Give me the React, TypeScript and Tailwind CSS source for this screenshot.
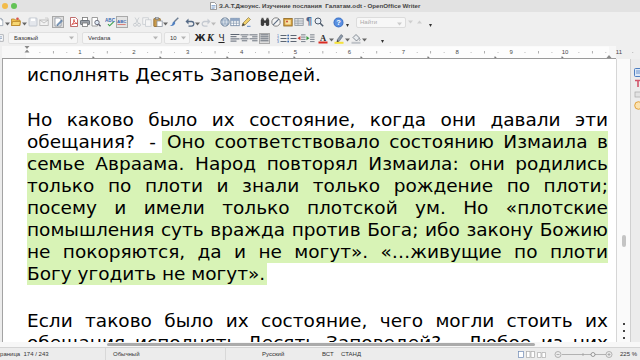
import React from 'react';

// ---------- small helpers ----------

function Slot({ w, children }: { w: string; children?: React.ReactNode }) {
  return <div className={`${w} h-full shrink-0 flex items-center justify-center`}>{children}</div>;
}

function Caret({ c = '#666' }: { c?: string }) {
  return (
    <svg width="5" height="4" viewBox="0 0 5 4" className="mt-[3px]">
      <path d="M0 0.5h5L2.5 3.5z" fill={c} />
    </svg>
  );
}

function Ico({ children }: { children: React.ReactNode }) {
  return (
    <svg width="10" height="10" viewBox="0 0 10 10" strokeWidth="0.8">
      {children}
    </svg>
  );
}

// ---------- toolbar icons ----------

const NewDoc = () => (
  <Ico>
    <path d="M1.5 .5h5l2 2v7h-7z" fill="#fff" stroke="#7f8ea0" />
    <path d="M6.5 .5v2h2" fill="none" stroke="#7f8ea0" />
  </Ico>
);
const OpenDoc = () => (
  <Ico>
    <path d="M.5 2h3l1 1h4.5v5.5h-8.5z" fill="#f2c04b" stroke="#b8852a" />
    <path d="M1.5 4.5h8l-1 4h-8z" fill="#f7d772" stroke="#b8852a" />
    <circle cx="6.5" cy="1.8" r="1.3" fill="#d9534a" />
  </Ico>
);
const Save = () => (
  <Ico>
    <rect x="1" y="1" width="8" height="8" rx="0.8" fill="#e4e7ec" stroke="#b9c0c9" />
    <rect x="3" y="1.5" width="4" height="2.5" fill="#fff" />
  </Ico>
);
const Mail = () => (
  <Ico>
    <rect x="0.8" y="3" width="8.4" height="5.5" fill="#f2f2f2" stroke="#b5b5b5" />
    <path d="M.8 3l4.2 3 4.2-3" fill="none" stroke="#b5b5b5" />
    <path d="M6 1h3v2" fill="none" stroke="#c7c7c7" />
  </Ico>
);
const EditDoc = () => (
  <div className="w-[12px] h-[12px] border border-[#a9a9a9] bg-[#dedede] flex items-center justify-center">
    <Ico>
      <path d="M2 1h4.5l1.5 1.5v6.5h-6z" fill="#fff" stroke="#8a93a0" />
      <path d="M4 7.5l4.5-4.5 1 1-4.5 4.5h-1z" fill="#7a9cc9" stroke="#41607f" strokeWidth="0.5" />
    </Ico>
  </div>
);
const Pdf = () => (
  <Ico>
    <path d="M1.5 .5h5l2 2v7h-7z" fill="#fff" stroke="#b04a4a" />
    <path d="M2.5 8c1.5-1 3-4 2.5-5.5-.5 1.5 1 3.5 3 4-1.5-.3-4 .3-5.5 1.5z" fill="none" stroke="#d0302a" />
  </Ico>
);
const Print = () => (
  <Ico>
    <rect x="2.5" y="0.5" width="5" height="3" fill="#fff" stroke="#777" />
    <rect x="0.5" y="3.5" width="9" height="4" rx="0.6" fill="#9aa0a8" stroke="#5e646c" />
    <rect x="2.5" y="6" width="5" height="3.5" fill="#fff" stroke="#777" />
  </Ico>
);
const Preview = () => (
  <Ico>
    <path d="M1 .5h5.5v8.5h-5.5z" fill="#fff" stroke="#888" />
    <circle cx="6" cy="5.5" r="2.2" fill="#dfe9f5" stroke="#556" />
    <path d="M7.6 7.2l2 2" stroke="#556" strokeWidth="1.3" />
  </Ico>
);
const Spell = () => (
  <svg width="11" height="10" viewBox="0 0 11 10">
    <text x="0" y="5" fontSize="4.6" fontWeight="700" fill="#3a67b0" fontFamily="Liberation Sans, sans-serif">ABC</text>
    <path d="M3 7.2l1.6 1.6 4-4" fill="none" stroke="#3aa04a" strokeWidth="1.1" />
  </svg>
);
const AutoSpell = () => (
  <div className="w-[12px] h-[12px] border border-[#a9a9a9] bg-[#e3e3e3] flex items-center justify-center">
    <svg width="10" height="10" viewBox="0 0 10 10">
      <text x="0" y="5.5" fontSize="4.4" fontWeight="700" fill="#3a67b0" fontFamily="Liberation Sans, sans-serif">ABC</text>
      <path d="M0.5 8l1-1 1 1 1-1 1 1 1-1 1 1 1-1 1 1" fill="none" stroke="#d23a2e" strokeWidth="0.7" />
    </svg>
  </div>
);
const Cut = () => (
  <Ico>
    <path d="M3 .5l3.5 6M7 .5l-3.5 6" stroke="#c2c6cc" />
    <circle cx="3" cy="7.8" r="1.5" fill="none" stroke="#c2c6cc" />
    <circle cx="7" cy="7.8" r="1.5" fill="none" stroke="#c2c6cc" />
  </Ico>
);
const Copy = () => (
  <Ico>
    <rect x="0.8" y="0.8" width="5.5" height="6.5" fill="#f5f5f5" stroke="#c7cbd0" />
    <rect x="3.6" y="2.8" width="5.5" height="6.5" fill="#f5f5f5" stroke="#c7cbd0" />
  </Ico>
);
const Paste = () => (
  <Ico>
    <rect x="0.8" y="1.5" width="6.5" height="8" rx="0.6" fill="#c99a4a" stroke="#8a6326" />
    <rect x="2.5" y="0.6" width="3" height="1.8" fill="#b0b6be" stroke="#6d737a" strokeWidth="0.5" />
    <rect x="4" y="4" width="5.2" height="5.5" fill="#fff" stroke="#8a93a0" />
  </Ico>
);
const Brush = () => (
  <Ico>
    <path d="M9.3 .7L5 5" stroke="#6c7d92" strokeWidth="1.4" />
    <path d="M5.5 4.5c-1 .2-1.8.6-2 1.8-.3 1.3-1.2 2.2-2.8 2.6 2.8.6 5-.6 5.6-2.9z" fill="#4f7fc0" />
  </Ico>
);
const Undo = () => (
  <Ico>
    <path d="M2.5 4.5h4a2.3 2.3 0 010 4.6h-3" fill="none" stroke="#566b86" strokeWidth="1.3" />
    <path d="M0.5 4.5l3-3v6z" fill="#566b86" />
  </Ico>
);
const Redo = () => (
  <Ico>
    <path d="M7.5 4.5h-4a2.3 2.3 0 000 4.6h3" fill="none" stroke="#c5cad1" strokeWidth="1.3" />
    <path d="M9.5 4.5l-3-3v6z" fill="#c5cad1" />
  </Ico>
);
const Globe = () => (
  <Ico>
    <circle cx="5" cy="5" r="4.2" fill="#9fb2c8" stroke="#6b7f96" />
    <path d="M.8 5h8.4M5 .8c-2 2.5-2 5.9 0 8.4M5 .8c2 2.5 2 5.9 0 8.4" fill="none" stroke="#e9eef4" strokeWidth="0.6" />
  </Ico>
);
const Table = () => (
  <Ico>
    <rect x="0.8" y="1.3" width="8.4" height="7.4" fill="#fff" stroke="#6f86a3" />
    <path d="M.8 3.8h8.4M.8 6.2h8.4M3.6 1.3v7.4M6.4 1.3v7.4" stroke="#6f86a3" strokeWidth="0.6" />
    <rect x="0.8" y="1.3" width="8.4" height="2.5" fill="#8fa6c4" />
  </Ico>
);
const Draw = () => (
  <Ico>
    <path d="M1 9l1-3 5.5-5.5 2 2L4 8z" fill="#f1d06a" stroke="#7a6b3a" strokeWidth="0.6" />
    <path d="M1 9l1-3 2 2z" fill="#444" />
    <path d="M6 9.3h3.5" stroke="#5d86c0" strokeWidth="1" />
  </Ico>
);
const Binoculars = () => (
  <Ico>
    <rect x="0.8" y="2" width="3.4" height="7" rx="1.4" fill="#3c3c3c" />
    <rect x="5.8" y="2" width="3.4" height="7" rx="1.4" fill="#3c3c3c" />
    <rect x="3.8" y="3.5" width="2.4" height="2.4" fill="#3c3c3c" />
    <rect x="1.5" y="0.8" width="2" height="2" fill="#555" />
    <rect x="6.5" y="0.8" width="2" height="2" fill="#555" />
  </Ico>
);
const Navigator = () => (
  <Ico>
    <circle cx="5" cy="5" r="4.2" fill="#f4f4f4" stroke="#6a6a6a" />
    <path d="M2.2 7.8L7.8 2.2" stroke="#5a6a80" strokeWidth="1.1" />
  </Ico>
);
const Gallery = () => (
  <Ico>
    <rect x="0.8" y="1.5" width="8.4" height="7.5" fill="#d9a441" stroke="#8b6421" />
    <rect x="2.3" y="3" width="5.4" height="4.5" fill="#f8e3a6" />
    <circle cx="4" cy="4.5" r="0.9" fill="#c0392b" />
  </Ico>
);
const DataSrc = () => (
  <Ico>
    <rect x="0.8" y="1.5" width="8.4" height="7" fill="#dcdfe3" stroke="#8c939c" />
    <path d="M.8 4h8.4M.8 6.3h8.4M4 1.5v7" stroke="#8c939c" strokeWidth="0.6" />
  </Ico>
);
const Pilcrow = () => (
  <span className="text-[10px] leading-none font-bold text-[#4c6a95] font-['DejaVu_Sans',sans-serif]">¶</span>
);
const Zoom = () => (
  <Ico>
    <circle cx="4" cy="4" r="3" fill="#e7eef7" stroke="#4d5a6b" strokeWidth="1" />
    <path d="M6.2 6.2l3 3" stroke="#4d5a6b" strokeWidth="1.5" />
  </Ico>
);
const Help = () => (
  <svg width="11" height="11" viewBox="0 0 11 11">
    <circle cx="5.5" cy="5.5" r="5" fill="#3f74c7" />
    <circle cx="5.5" cy="5.5" r="4" fill="#5a8fe0" />
    <text x="5.5" y="8.2" textAnchor="middle" fontSize="7.5" fontWeight="700" fill="#fff" fontFamily="Liberation Sans, sans-serif">?</text>
  </svg>
);

// format bar icons
const Lines = ({ rows }: { rows: [number, number][] }) => (
  <Ico>
    {rows.map(([x1, x2], i) => (
      <path key={i} d={`M${x1} ${1.5 + i * 2.2}H${x2}`} stroke="#4b5563" strokeWidth="0.9" />
    ))}
  </Ico>
);
const Numbering = () => (
  <Ico>
    <text x="0" y="3.5" fontSize="3.4" fill="#3768b0" fontFamily="Liberation Sans, sans-serif">1</text>
    <text x="0" y="6.5" fontSize="3.4" fill="#3768b0" fontFamily="Liberation Sans, sans-serif">2</text>
    <text x="0" y="9.5" fontSize="3.4" fill="#3768b0" fontFamily="Liberation Sans, sans-serif">3</text>
    <path d="M3.5 2.5h6M3.5 5.5h6M3.5 8.5h6" stroke="#4b5563" strokeWidth="0.9" />
  </Ico>
);
const Bullets = () => (
  <Ico>
    <circle cx="1.2" cy="2.5" r="0.9" fill="#3768b0" />
    <circle cx="1.2" cy="5.5" r="0.9" fill="#3768b0" />
    <circle cx="1.2" cy="8.5" r="0.9" fill="#3768b0" />
    <path d="M3.5 2.5h6M3.5 5.5h6M3.5 8.5h6" stroke="#4b5563" strokeWidth="0.9" />
  </Ico>
);
const Indent = ({ dec }: { dec?: boolean }) => (
  <Ico>
    <path d="M4.5 1.5h5M4.5 4h5M4.5 6.5h5M4.5 9h5" stroke="#4b5563" strokeWidth="0.8" />
    {dec ? <path d="M3.8 2.8L.5 5.2l3.3 2.4z" fill="#d13b30" /> : <path d="M.5 2.8l3.3 2.4-3.3 2.4z" fill="#3a9a3f" />}
  </Ico>
);
const FontColor = () => (
  <svg width="10" height="11" viewBox="0 0 10 11">
    <text x="5" y="7.5" textAnchor="middle" fontSize="8.5" fontWeight="700" fill="#2b2b2b" fontFamily="Liberation Serif, serif">A</text>
    <rect x="0.5" y="8.5" width="9" height="2" fill="#d92b22" />
  </svg>
);
const Highlight = () => (
  <svg width="10" height="11" viewBox="0 0 10 11">
    <path d="M3 7l4-5.5 2 1.5-4 5.5z" fill="#8d9aab" stroke="#4e5866" strokeWidth="0.5" />
    <path d="M3 7l2 1.5-2.5 1z" fill="#333" />
    <rect x="0.5" y="8.8" width="9" height="2" fill="#f6e23a" />
  </svg>
);
const BgColor = () => (
  <svg width="10" height="11" viewBox="0 0 10 11">
    <path d="M2 4.5l3-3 3.5 3.5-3 3z" fill="#e9ecef" stroke="#59636f" strokeWidth="0.7" />
    <path d="M8.5 5.5c.8 1 .8 1.8 0 2" stroke="#59636f" strokeWidth="0.7" fill="none" />
    <rect x="0.5" y="8.8" width="9" height="2" fill="#bfc3c8" />
  </svg>
);

// ---------- bars ----------

function TitleBar() {
  return (
    <div className="h-[12px] shrink-0 bg-[#e2e2e2] flex items-center relative">
      <div className="absolute left-[2px] top-[3px] w-[6px] h-[6px] rounded-full bg-[#f2bb4a]" />
      <div className="absolute left-[11px] top-[3px] w-[6px] h-[6px] rounded-full bg-[#63c356]" />
      <div className="pl-[210px] flex items-center gap-[2px]">
        <svg width="7" height="8" viewBox="0 0 7 8">
          <path d="M.5.5h4l2 2v5h-6z" fill="#fff" stroke="#777" strokeWidth="0.7" />
          <path d="M1.5 3.5h4M1.5 5h4M1.5 6.3h3" stroke="#4a78b5" strokeWidth="0.6" />
        </svg>
        <span className="text-[6.2px] leading-none font-bold text-[#444]">
          З.А.Т.Джоунс. Изучение послания&nbsp; Галатам.odt - OpenOffice Writer
        </span>
      </div>
    </div>
  );
}

function MainToolbar() {
  return (
    <div className="h-[18px] shrink-0 bg-[#efefef] flex items-center -ml-[4px] pt-[2px]">
      <Slot w="w-[8px]"><NewDoc /></Slot>
      <Slot w="w-[6px]"><Caret /></Slot>
      <Slot w="w-[11px]"><OpenDoc /></Slot>
      <Slot w="w-[6px]"><Caret /></Slot>
      <Slot w="w-[11px]"><Save /></Slot>
      <Slot w="w-[11px]"><Mail /></Slot>
      <div className="w-[3px]" />
      <Slot w="w-[12px]"><EditDoc /></Slot>
      <div className="w-[4px]" />
      <Slot w="w-[11px]"><Pdf /></Slot>
      <Slot w="w-[11px]"><Print /></Slot>
      <Slot w="w-[11px]"><Preview /></Slot>
      <div className="w-[4px]" />
      <Slot w="w-[11px]"><Spell /></Slot>
      <Slot w="w-[12px]"><AutoSpell /></Slot>
      <div className="w-[4px]" />
      <Slot w="w-[10px]"><Cut /></Slot>
      <Slot w="w-[10px]"><Copy /></Slot>
      <Slot w="w-[11px]"><Paste /></Slot>
      <Slot w="w-[5px]"><Caret /></Slot>
      <Slot w="w-[11px]"><Brush /></Slot>
      <div className="w-[6px]" />
      <Slot w="w-[10px]"><Undo /></Slot>
      <Slot w="w-[5px]"><Caret /></Slot>
      <Slot w="w-[11px]"><Redo /></Slot>
      <Slot w="w-[5px]"><Caret c="#bbb" /></Slot>
      <div className="w-[4px]" />
      <Slot w="w-[10px]"><Globe /></Slot>
      <Slot w="w-[10px]"><Table /></Slot>
      <Slot w="w-[11px]"><Draw /></Slot>
      <div className="w-[8px]" />
      <Slot w="w-[11px]"><Binoculars /></Slot>
      <Slot w="w-[12px]"><Navigator /></Slot>
      <Slot w="w-[12px]"><Gallery /></Slot>
      <Slot w="w-[10px]"><DataSrc /></Slot>
      <Slot w="w-[10px]"><Pilcrow /></Slot>
      <Slot w="w-[10px]"><Zoom /></Slot>
      <div className="w-[9px]" />
      <Slot w="w-[11px]"><Help /></Slot>
      <Slot w="w-[6px]"><svg width="3" height="3" viewBox="0 0 3 3" className="mt-[6px]"><path d="M0 0h3L1.5 3z" fill="#333" /></svg></Slot>
      <div className="w-[6px]" />
      <div className="w-[50px] h-[11px] shrink-0 bg-[#f7f7f7] border border-[#dcdcdc] rounded-[2px] flex items-center justify-between px-[3px]">
        <span className="text-[6px] leading-none text-[#aaa]">Найти</span>
        <Caret c="#ccc" />
      </div>
      <Slot w="w-[8px]">
        <svg width="5" height="4" viewBox="0 0 5 4"><path d="M0 .5h5L2.5 3.5z" fill="#cfcfcf" /></svg>
      </Slot>
      <Slot w="w-[10px]">
        <svg width="5" height="4" viewBox="0 0 5 4"><path d="M0 3.5h5L2.5 .5z" fill="#cfcfcf" /></svg>
      </Slot>
      <Slot w="w-[12px]"><svg width="3" height="3" viewBox="0 0 3 3" className="mt-[6px]"><path d="M0 0h3L1.5 3z" fill="#333" /></svg></Slot>
    </div>
  );
}

function Field({ w, label }: { w: string; label: string }) {
  return (
    <div className={`${w} h-[12px] shrink-0 bg-[#f6f6f6] border border-[#e0e0e0] rounded-[2px] flex items-center justify-between pl-[5px] pr-[3px]`}>
      <span className="text-[6px] leading-none text-[#333]">{label}</span>
      <svg width="5" height="4" viewBox="0 0 5 4"><path d="M0 .5h5L2.5 3.5z" fill="#b5b5b5" /></svg>
    </div>
  );
}

function FormatToolbar() {
  return (
    <div className="h-[16px] shrink-0 bg-[#efefef] flex items-center -ml-[4px]">
      <Slot w="w-[8px]">
        <Ico>
          <rect x="1" y="1" width="8" height="8" fill="#fff" stroke="#8a8f96" />
          <path d="M2.5 3.5h5M2.5 5.5h5M2.5 7.5h3" stroke="#4c6a95" strokeWidth="0.7" />
        </Ico>
      </Slot>
      <div className="w-[4px]" />
      <Field w="w-[70px]" label="Базовый" />
      <div className="w-[4px]" />
      <Field w="w-[80px]" label="Verdana" />
      <div className="w-[2px]" />
      <Field w="w-[26px]" label="10" />
      <div className="w-[5px]" />
      <Slot w="w-[10px]"><span className="text-[9px] leading-none font-bold text-[#222] font-['DejaVu_Sans',sans-serif]">Ж</span></Slot>
      <Slot w="w-[11px]"><span className="text-[10px] leading-none italic font-bold text-[#222] font-['Liberation_Serif',serif]">К</span></Slot>
      <Slot w="w-[11px]"><span className="text-[9px] leading-none underline text-[#222] font-['DejaVu_Sans',sans-serif]">Ч</span></Slot>
      <div className="w-[3px]" />
      <Slot w="w-[10px]"><Lines rows={[[0.5, 9.5], [0.5, 6.5], [0.5, 9.5], [0.5, 6.5]]} /></Slot>
      <Slot w="w-[9px]"><Lines rows={[[0.5, 9.5], [2, 8], [0.5, 9.5], [2, 8]]} /></Slot>
      <Slot w="w-[9px]"><Lines rows={[[0.5, 9.5], [3.5, 9.5], [0.5, 9.5], [3.5, 9.5]]} /></Slot>
      <Slot w="w-[12px]">
        <div className="w-[11px] h-[11px] border border-[#a9a9a9] bg-[#dcdcdc] flex items-center justify-center">
          <Lines rows={[[0.5, 9.5], [0.5, 9.5], [0.5, 9.5], [0.5, 9.5]]} />
        </div>
      </Slot>
      <div className="w-[7px]" />
      <Slot w="w-[10px]"><Numbering /></Slot>
      <Slot w="w-[10px]"><Bullets /></Slot>
      <Slot w="w-[9px]"><Indent dec /></Slot>
      <Slot w="w-[9px]"><Indent /></Slot>
      <div className="w-[3px]" />
      <Slot w="w-[10px]"><FontColor /></Slot>
      <Slot w="w-[6px]"><Caret /></Slot>
      <Slot w="w-[10px]"><Highlight /></Slot>
      <Slot w="w-[6px]"><Caret /></Slot>
      <Slot w="w-[11px]"><BgColor /></Slot>
      <Slot w="w-[7px]"><Caret /></Slot>
      <div className="w-[10px]" />
      <Slot w="w-[8px]"><svg width="3" height="3" viewBox="0 0 3 3" className="mt-[6px]"><path d="M0 0h3L1.5 3z" fill="#333" /></svg></Slot>
    </div>
  );
}

function Ruler() {
  const unit = 53.9;
  const origin = 26;
  const marks: React.ReactNode[] = [];
  for (let n = 0; n < 12; n++) {
    const x0 = origin + n * unit;
    if (n > 0) {
      marks.push(
        <text key={`n${n}`} x={x0} y={8} textAnchor="middle" fontSize="6" fill="#4a4a4a" fontFamily="Liberation Sans, sans-serif">
          {n}
        </text>
      );
    }
    [0.25, 0.75].forEach((f) => marks.push(<rect key={`d${n}${f}`} x={x0 + f * unit} y={6} width={0.8} height={0.8} fill="#9a9a9a" />));
    marks.push(<rect key={`h${n}`} x={x0 + 0.5 * unit} y={5} width={0.8} height={2.5} fill="#9a9a9a" />);
  }
  for (let k = 0; k < 8; k++) {
    const x = 93 + k * 67;
    marks.push(<path key={`t${k}`} d={`M${x} 10.5v1.5h1.5`} fill="none" stroke="#333" strokeWidth="0.8" />);
  }
  return (
    <div className="h-[13px] shrink-0 bg-[#efefef]">
      <svg width="640" height="13" viewBox="0 0 640 13">
        <rect x="2" y="0" width="614" height="12.5" fill="#f7f7f7" />
        <rect x="26" y="0.5" width="583" height="11.5" fill="#fdfdfd" />
        {marks}
        <path d="M24.5 0h5l-2.5 3z M24.5 6.5h5l-2.5-3z" fill="#8a8a8a" />
        <path d="M606.5 12h5l-2.5-3z" fill="#8a8a8a" />
        <path d="M2 12.5h614" stroke="#9a9a9a" strokeWidth="1" />
      </svg>
    </div>
  );
}

// ---------- document ----------

function Line({ text, hl }: { text: string; hl?: boolean }) {
  return (
    <div className={`h-[22px] flex justify-between ${hl ? 'bg-[#d8f3b6]' : ''}`}>
      {text.split(' ').map((w, i) => (
        <span key={i}>{w}</span>
      ))}
    </div>
  );
}

function Document() {
  return (
    <div className="flex-1 min-w-0 border-l border-[#a3a3a3] bg-white pl-[24px] pr-[8px] pt-[5px] overflow-hidden text-[18.5px] leading-[22px] text-black font-['DejaVu_Sans',Verdana,sans-serif]">
      <div className="h-[22px]">исполнять Десять Заповедей.</div>

      <div className="mt-[23px]">
        <Line text="Но каково было их состояние, когда они давали эти" />
        <div className="h-[22px] flex">
          <div className="w-[135px] shrink-0 flex justify-between pr-[6px]">
            <span>обещания?</span>
            <span>-</span>
          </div>
          <div className="flex-1 pl-[5px] bg-[#d8f3b6] flex justify-between">
            <span>Оно</span>
            <span>соответствовало</span>
            <span>состоянию</span>
            <span>Измаила</span>
            <span>в</span>
          </div>
        </div>
        <Line hl text="семье Авраама. Народ повторял Измаила: они родились" />
        <Line hl text="только по плоти и знали только рождение по плоти;" />
        <Line hl text="посему и имели только плотской ум. Но «плотские" />
        <Line hl text="помышления суть вражда против Бога; ибо закону Божию" />
        <Line hl text="не покоряются, да и не могут». «…живущие по плоти" />
        <div className="h-[22px]">
          <span className="inline-block h-[22px] bg-[#d8f3b6] pr-[2px]">Богу угодить не могут».</span>
        </div>
      </div>

      <div className="mt-[25px]">
        <Line text="Если таково было их состояние, чего могли стоить их" />
        <Line text="обещания исполнять Десять Заповедей? - Любое из них" />
      </div>
    </div>
  );
}

function VScroll() {
  return (
    <div className="w-[14px] shrink-0 bg-[#fafafa] border-l border-[#d6d6d6] flex flex-col items-center">
      <div className="h-[176px]" />
      <div className="w-[4px] h-[12px] rounded-[2px] bg-[#c4c4c4]" />
      <div className="flex-1" />
      <div className="flex flex-col gap-[5px] pb-[3px] items-center">
        <div className="w-[2px] h-[2px] bg-[#444]" />
        <div className="w-[2px] h-[2px] bg-[#444]" />
        <div className="w-[2px] h-[2px] bg-[#444]" />
      </div>
    </div>
  );
}

function Sidebar() {
  return (
    <div className="w-[10px] shrink-0 bg-[#ececec] border-l border-[#d0d0d0] flex flex-col pt-[9px] pl-[3px] gap-[2px] overflow-hidden">
      <svg width="9" height="9" viewBox="0 0 9 9" className="shrink-0">
        <rect x="0.5" y="0.5" width="8" height="8" rx="1" fill="#dce8f7" stroke="#4f7fc0" />
        <path d="M2 3h5M2 5h5" stroke="#4f7fc0" strokeWidth="0.8" />
      </svg>
      <svg width="9" height="9" viewBox="0 0 9 9" className="shrink-0">
        <path d="M1 1.5h6M4 1.5v6.5" stroke="#d2566b" strokeWidth="1.6" />
      </svg>
      <svg width="9" height="9" viewBox="0 0 9 9" className="shrink-0">
        <rect x="1" y="2" width="7" height="5" fill="#e2e2e2" stroke="#a8a8a8" strokeWidth="0.7" />
      </svg>
      <svg width="9" height="9" viewBox="0 0 9 9" className="shrink-0">
        <circle cx="4.5" cy="4.5" r="3.8" fill="#fbe2b0" stroke="#e09a2c" strokeWidth="0.9" />
      </svg>
    </div>
  );
}

function HScroll() {
  return (
    <div className="h-[5px] shrink-0 bg-[#f7f7f7] flex items-center pl-[107px]">
      <div className="w-[428px] h-[3px] rounded-full bg-[#ababab]" />
    </div>
  );
}

function StatusBar() {
  return (
    <div className="h-[13px] shrink-0 bg-[#ececec] border-t border-[#d4d4d4] flex items-center text-[6px] leading-none text-[#333] overflow-hidden">
      <div className="w-[98px] shrink-0 -ml-[7px] whitespace-nowrap">Страница&nbsp; 174 / 243</div>
      <div className="w-[14px] shrink-0" />
      <div className="w-[120px] shrink-0 h-full border-l border-[#d8d8d8] flex items-center pl-[7px]">Обычный</div>
      <div className="w-[97px] shrink-0 h-full border-l border-[#d8d8d8] flex items-center pl-[36px]">Русский</div>
      <div className="w-[19px] shrink-0">ВСТ</div>
      <div className="w-[40px] shrink-0">СТАНД</div>
      <div className="flex-1" />
      <div className="flex items-center gap-[2px] mr-[8px] shrink-0">
        <svg width="6" height="7" viewBox="0 0 6 7"><rect x="0.5" y="0.5" width="5" height="6" fill="#fff" stroke="#6f8bb5" strokeWidth="0.7" /></svg>
        <svg width="9" height="7" viewBox="0 0 9 7"><rect x="0.5" y="0.5" width="3.5" height="6" fill="#fff" stroke="#aaa" strokeWidth="0.7" /><rect x="5" y="0.5" width="3.5" height="6" fill="#fff" stroke="#aaa" strokeWidth="0.7" /></svg>
        <svg width="9" height="7" viewBox="0 0 9 7"><path d="M.5 1.5h3.5v5h-3.5zM5 1.5h3.5v5h-3.5z" fill="#fff" stroke="#aaa" strokeWidth="0.7" /></svg>
      </div>
      <svg width="60" height="9" viewBox="0 0 60 9" className="shrink-0">
        <circle cx="4" cy="4.5" r="3" fill="none" stroke="#999" strokeWidth="0.7" />
        <path d="M2.5 4.5h3" stroke="#999" strokeWidth="0.7" />
        <path d="M8 4.5h44" stroke="#999" strokeWidth="0.7" />
        <path d="M29 3v3" stroke="#999" strokeWidth="0.7" />
        <circle cx="39" cy="4.5" r="2" fill="#f2f2f2" stroke="#777" strokeWidth="0.7" />
        <circle cx="55" cy="4.5" r="3" fill="none" stroke="#999" strokeWidth="0.7" />
        <path d="M53.5 4.5h3M55 3v3" stroke="#999" strokeWidth="0.7" />
      </svg>
      <div className="w-[6px] shrink-0" />
      <div className="w-[20px] shrink-0 whitespace-nowrap">225 %</div>
    </div>
  );
}

export default function App() {
  return (
    <div className="w-[640px] h-[360px] overflow-hidden flex flex-col bg-[#efefef] font-['Liberation_Sans',sans-serif]">
      <TitleBar />
      <MainToolbar />
      <FormatToolbar />
      <Ruler />
      <div className="flex flex-1 min-h-0">
        <div className="w-[2px] shrink-0 bg-[#ececec]" />
        <Document />
        <VScroll />
        <Sidebar />
      </div>
      <HScroll />
      <StatusBar />
    </div>
  );
}
